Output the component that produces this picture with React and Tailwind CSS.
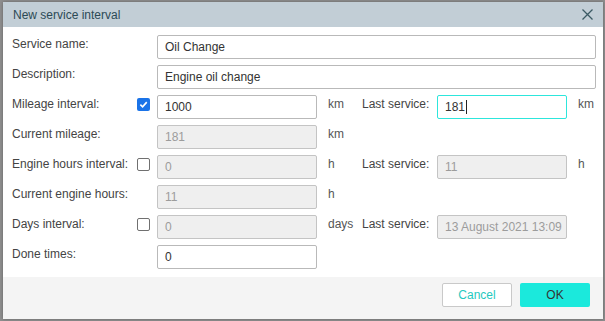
import React from 'react';

const font = { fontFamily: '"Liberation Sans", Arial, sans-serif' };

const Field = ({ value, disabled, width = 'w-[160px]', focused, pad = 'px-[7px]' }) => (
  <div
    className={`${width} ${pad} h-6 shrink-0 rounded-[2px] border flex items-center overflow-hidden whitespace-nowrap text-[12px] ${
      disabled
        ? 'bg-[#efefef] border-[#c4c4c4] text-[#9c9c9c]'
        : focused
        ? 'bg-white border-[#2de6dc] text-[#333]'
        : 'bg-white border-[#b9b9b9] text-[#333]'
    }`}
  >
    <span>{value}</span>
    {focused && <span className="ml-px h-[14px] w-px bg-[#222]" />}
  </div>
);

const Check = ({ checked }) =>
  checked ? (
    <span className="mt-[3px] w-[13px] h-[13px] rounded-[2px] bg-[#1a73e8] flex items-center justify-center">
      <svg width="9" height="9" viewBox="0 0 10 10">
        <path d="M1.5 5.2 L4 7.6 L8.6 2.4" fill="none" stroke="white" strokeWidth="1.8" />
      </svg>
    </span>
  ) : (
    <span className="mt-[3px] w-[13px] h-[13px] rounded-[2px] border border-[#707070] bg-white" />
  );

const Row = ({ label, check, children }) => (
  <div className="flex h-6 items-start">
    <div className="w-[145px] shrink-0 flex items-start justify-between pr-[7px]">
      <span className="pt-px leading-4 text-[12px] text-[#444]">{label}</span>
      {check}
    </div>
    {children}
  </div>
);

const Unit = ({ children, w = 'w-[45px]' }) => (
  <span className={`${w} shrink-0 pl-[11px] pt-px leading-4 text-[12px] text-[#555]`}>{children}</span>
);

const Last = () => (
  <span className="w-[75px] shrink-0 pt-px leading-4 text-[12px] text-[#444]">Last service:</span>
);

export default function App() {
  return (
    <div className="w-[605px] h-[321px] bg-[#8e8e8e] pt-[2px] pl-[3px]" style={font}>
      <div className="w-[600px] h-[317px] bg-white flex flex-col shadow-[0_0_3px_rgba(0,0,0,0.3)]">
        <div className="h-[25px] shrink-0 bg-[#c2ced6] flex items-center justify-between pl-[10px] pr-[10px]">
          <span className="text-[12px] text-[#2c4a55]">New service interval</span>
          <svg width="11" height="11" viewBox="0 0 11 11">
            <path d="M0.5 0.5 L10.5 10.5 M10.5 0.5 L0.5 10.5" stroke="#3b5a64" strokeWidth="1.3" />
          </svg>
        </div>

        <div className="flex-1 flex flex-col gap-[6px] pt-2 pl-[9px]">
          <Row label="Service name:">
            <Field value="Oil Change" width="w-[439px]" />
          </Row>
          <Row label="Description:">
            <Field value="Engine oil change" width="w-[439px]" />
          </Row>
          <Row label="Mileage interval:" check={<Check checked />}>
            <Field value="1000" />
            <Unit>km</Unit>
            <Last />
            <Field value="181" width="w-[130px]" focused />
            <Unit>km</Unit>
          </Row>
          <Row label="Current mileage:">
            <Field value="181" disabled />
            <Unit>km</Unit>
          </Row>
          <Row label="Engine hours interval:" check={<Check />}>
            <Field value="0" disabled />
            <Unit>h</Unit>
            <Last />
            <Field value="11" width="w-[130px]" disabled />
            <Unit>h</Unit>
          </Row>
          <Row label="Current engine hours:">
            <Field value="11" disabled />
            <Unit>h</Unit>
          </Row>
          <Row label="Days interval:" check={<Check />}>
            <Field value="0" disabled />
            <Unit>days</Unit>
            <Last />
            <Field value="13 August 2021 13:09" width="w-[130px]" pad="pl-[7px] pr-0" disabled />
          </Row>
          <Row label="Done times:">
            <Field value="0" />
          </Row>
        </div>

        <div className="h-[42px] shrink-0 bg-[#f4f4f4] flex items-start justify-end gap-2 pt-[6px] pr-[13px]">
          <button className="w-[70px] h-6 rounded-[2px] border border-[#c9c9c9] bg-white text-[12px] text-[#1fc9c0]">
            Cancel
          </button>
          <button className="w-[70px] h-6 rounded-[2px] bg-[#1be9dc] text-[12px] text-[#333]">
            OK
          </button>
        </div>
      </div>
    </div>
  );
}
